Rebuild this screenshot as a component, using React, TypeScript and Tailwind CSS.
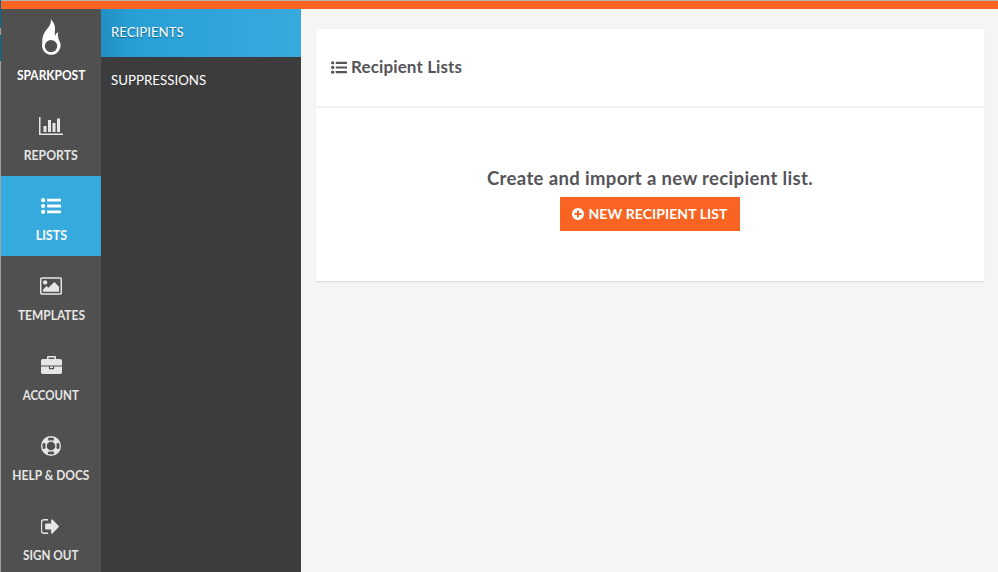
import React from "react";

type NavItem = { label: string; icon: React.ReactNode; active?: boolean; scale: string };

function FontIcon({ box, className, d }: { box: string; className: string; d: string }) {
  return (
    <svg viewBox={box} className={className} fill="currentColor">
      <path d={d} />
    </svg>
  );
}

function ListIcon({ className }: { className: string }) {
  return (
    <svg viewBox="0 0 20 16" className={className} fill="currentColor">
      <circle cx="2.1" cy="2.2" r="2.1" />
      <circle cx="2.1" cy="8" r="2.1" />
      <circle cx="2.1" cy="13.8" r="2.1" />
      <rect x="6" y="0.8" width="14" height="2.8" rx="0.3" />
      <rect x="6" y="6.6" width="14" height="2.8" rx="0.3" />
      <rect x="6" y="12.4" width="14" height="2.8" rx="0.3" />
    </svg>
  );
}

const chart = (
  <FontIcon
    box="0 128 2048 1536"
    className="h-[18px] w-6"
    d="M640 896v512h-256v-512h256zm384-512v1024h-256v-1024h256zm1024 1152v128h-2048v-1536h128v1408h1920zm-640-896v768h-256v-768h256zm384-384v1152h-256v-1152h256z"
  />
);
const picture = (
  <FontIcon
    box="-64 128 1920 1536"
    className="h-[18px] w-[22px]"
    d="M576 576q0 80-56 136t-136 56-136-56-56-136 56-136 136-56 136 56 56 136zm1024 384v448h-1408v-192l320-320 160 160 512-512zm96-704h-1600q-13 0-22.5 9.5t-9.5 22.5v1216q0 13 9.5 22.5t22.5 9.5h1600q13 0 22.5-9.5t9.5-22.5v-1216q0-13-9.5-22.5t-22.5-9.5zm160 32v1216q0 66-47 113t-113 47h-1600q-66 0-113-47t-47-113v-1216q0-66 47-113t113-47h1600q66 0 113 47t47 113z"
  />
);
const briefcase = (
  <FontIcon
    box="0 0 1792 1536"
    className="mb-[2px] h-[18px] w-[21px]"
    d="M640 256h512v-128h-512v128zm1152 640v480q0 66-47 113t-113 47h-1472q-66 0-113-47t-47-113v-480h672v160q0 26 19 45t45 19h320q26 0 45-19t19-45v-160h672zm-768 0v128h-256v-128h256zm768-480v384h-1792v-384q0-66 47-113t113-47h352v-160q0-40 28-68t68-28h576q40 0 68 28t28 68v160h352q66 0 113 47t47 113z"
  />
);
const signOut = (
  <FontIcon
    box="96 256 1536 1280"
    className="mr-[2px] h-[15px] w-[18px]"
    d="M704 1440q0 4 1 20t.5 26.5-3 23.5-10 19.5-20.5 6.5h-320q-119 0-203.5-84.5t-84.5-203.5v-704q0-119 84.5-203.5t203.5-84.5h320q13 0 22.5 9.5t9.5 22.5q0 4 1 20t.5 26.5-3 23.5-10 19.5-20.5 6.5h-320q-66 0-113 47t-47 113v704q0 66 47 113t113 47h312l11.5 1 11.5 3 8 5.5 7 9 2 13.5zm928-544q0 26-19 45l-544 544q-19 19-45 19t-45-19-19-45v-288h-448q-26 0-45-19t-19-45v-384q0-26 19-45t45-19h448v-288q0-26 19-45t45-19 45 19l544 544q19 19 19 45z"
  />
);
const lifeRing = (
  <svg viewBox="0 0 20 20" className="size-5" fill="none" stroke="currentColor">
    <circle cx="10" cy="10" r="9.3" strokeWidth="1.4" />
    <circle cx="10" cy="10" r="5" strokeWidth="1.4" />
    <circle cx="10" cy="10" r="7.2" strokeWidth="5" pathLength="360" strokeDasharray="44 46" strokeDashoffset="-23" />
  </svg>
);

const items: NavItem[] = [
  { label: "REPORTS", icon: chart, scale: "scale-x-[0.94]" },
  { label: "LISTS", icon: <ListIcon className="h-4 w-5" />, active: true, scale: "scale-x-[0.96]" },
  { label: "TEMPLATES", icon: picture, scale: "scale-x-[0.92]" },
  { label: "ACCOUNT", icon: briefcase, scale: "scale-x-[0.885]" },
  { label: "HELP & DOCS", icon: lifeRing, scale: "scale-x-[0.92]" },
  { label: "SIGN OUT", icon: signOut, scale: "scale-x-[0.9]" },
];

function PrimaryNav() {
  return (
    <nav className="flex w-[100px] shrink-0 flex-col bg-[#505050] text-[13px] leading-4 font-bold">
      <div className="flex h-[87px] shrink-0 flex-col items-center pt-[10px] text-white">
        <svg viewBox="0 0 20 37" className="h-[37px] w-5" fill="currentColor">
          <path
            fillRule="evenodd"
            d="M9.8 0C13 3.500 14.300 7 14 10.500C13.800 13 13.500 15 14.300 17C14.600 15 15.600 13.800 17.300 13.200C16.300 16 17.100 18.500 18.100 21.500A9.300 9.300 0 1 1 1.300 24C1 17 3.500 13 6.500 9.500C9 6.500 10.300 4 9.800 0ZM10 20.900A6.200 6.200 0 1 1 10 33.300A6.200 6.200 0 1 1 10 20.900Z"
          />
        </svg>
        <span className="mt-[11px] scale-x-[0.92]">SPARKPOST</span>
      </div>
      {items.map((item) => (
        <a
          key={item.label}
          className={`flex h-20 shrink-0 flex-col items-center pt-5 ${item.active ? "bg-[#36a9dd] text-white" : "text-[#e6e6e6]"}`}
        >
          <span className="flex h-5 items-center">{item.icon}</span>
          <span className={`mt-[11px] whitespace-nowrap ${item.scale}`}>{item.label}</span>
        </a>
      ))}
    </nav>
  );
}

export default function App() {
  return (
    <div className="flex h-[572px] w-[998px] overflow-hidden bg-[#f5f5f5] font-[Lato,sans-serif]">
      <div className="flex w-px shrink-0 flex-col bg-[#a0a0a0]">
        <div className="h-[28px] bg-[#006b98]" />
        <div className="h-[7px] bg-[#a0a0a0]" />
        <div className="h-[26px] bg-[#006b98]" />
      </div>
      <div className="flex min-w-0 flex-1 flex-col">
        <div className="h-[9px] shrink-0 border-t border-[#b3b3b3] bg-[#fa6423]" />
        <div className="flex min-h-0 flex-1">
          <PrimaryNav />
          <nav className="w-[200px] shrink-0 bg-[#3c3c3c] text-sm text-white">
            <a className="flex h-12 items-center bg-linear-to-r from-[#218fc2] via-[#279fd5] via-15% to-[#38a9dd] px-[10px] pb-[2px] [text-shadow:0_1px_1px_#0006]">
              <span className="origin-left scale-x-[0.945]">RECIPIENTS</span>
            </a>
            <a className="flex h-12 items-center px-[10px] pb-[2px]">
              <span className="origin-left scale-x-[0.95]">SUPPRESSIONS</span>
            </a>
          </nav>
          <main className="min-w-0 flex-1 pt-5 pr-[14px] pl-[15px]">
            <section className="h-[252px] bg-white text-[#555459] shadow-[0_1px_1px_#00000018]">
              <header className="flex h-[79px] items-center border-b-2 border-[#f2f2f2] pl-[15px]">
                <ListIcon className="mr-1 h-[13px] w-4" />
                <h1 className="pb-px text-[17px] font-bold tracking-[0.12px]">Recipient Lists</h1>
              </header>
              <div className="flex flex-col items-center pt-[58px]">
                <h2 className="text-[18.5px] leading-6 font-bold tracking-[0.35px]">Create and import a new recipient list.</h2>
                <button className="mt-[7px] flex h-[34px] w-[180px] items-center justify-center bg-[#fa6423] text-sm font-bold whitespace-nowrap text-white">
                  <FontIcon
                    box="128 128 1536 1536"
                    className="mr-1 size-3"
                    d="M1344 960v-128q0-26-19-45t-45-19h-256v-256q0-26-19-45t-45-19h-128q-26 0-45 19t-19 45v256h-256q-26 0-45 19t-19 45v128q0 26 19 45t45 19h256v256q0 26 19 45t45 19h128q26 0 45-19t19-45v-256h256q26 0 45-19t19-45zm320-64q0 209-103 385.5t-279.5 279.5-385.5 103-385.5-103-279.5-279.5-103-385.5 103-385.5 279.5-279.5 385.5-103 385.5 103 279.5 279.5 103 385.5z"
                  />
                  <span className="tracking-[0.08px]">NEW RECIPIENT LIST</span>
                </button>
              </div>
            </section>
          </main>
        </div>
      </div>
    </div>
  );
}
